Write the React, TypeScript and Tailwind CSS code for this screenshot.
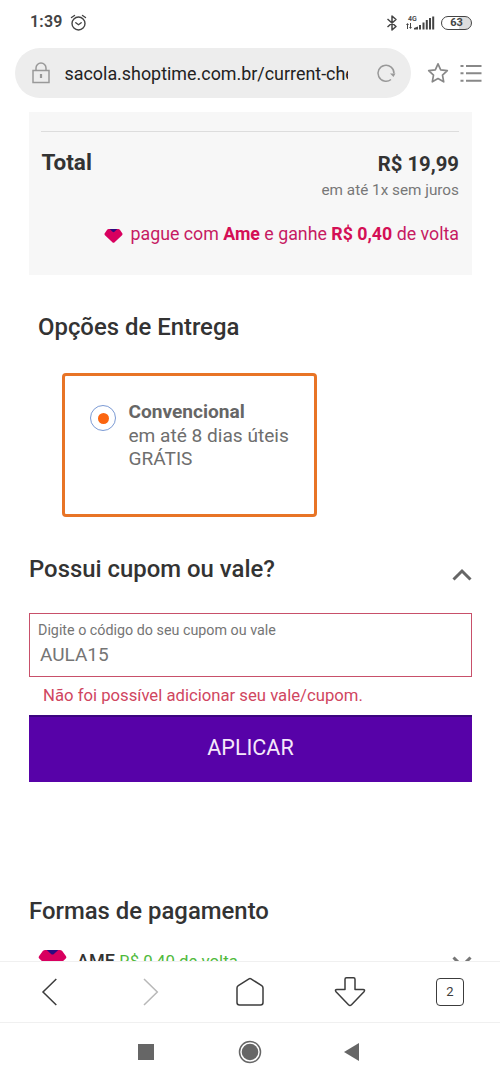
import type { ReactNode } from 'react'

function Gem({ className }: { className?: string }) {
  return (
    <svg viewBox="0 0 20 14" className={className} preserveAspectRatio="none">
      <path d="M5 0h10q1 0 1.700.7L19.200 4.200q.8 1-.2 2L11.200 13.300q-1.200 1-2.400 0L1 6.200q-1-1-.2-2L3.300.7Q4 0 5 0z" fill="#d8005f" />
      <path d="M6 0h8l-3 2.800q-1 .8-2 0z" fill="#2b0a80" />
    </svg>
  )
}

function StatusBar() {
  return (
    <div className="flex h-12 shrink-0 items-start justify-between pt-[12px] pr-7 pl-[30px] text-[#444]">
      <div className="flex h-5 items-center gap-[7px]">
        <span className="text-[16px] leading-5 font-semibold tracking-[0.2px]">1:39</span>
        <svg width="17" height="17" viewBox="0 0 17 17" fill="none" stroke="currentColor" strokeWidth="1.400" strokeLinecap="round">
          <circle cx="8.500" cy="9.500" r="6.500" />
          <path d="M5.800 8.700l2.700 2 2.700-2M1.500 3.500l3-2M15.500 3.500l-3-2" />
        </svg>
      </div>
      <div className="flex h-5 items-center pt-px">
        <svg width="12" height="18" viewBox="0 0 12 18" fill="none" stroke="currentColor" strokeWidth="1.500" strokeLinejoin="round">
          <path d="M1.500 5l8.500 7.500L6 16V2l4 3.500L1.500 13" />
        </svg>
        <svg width="29" height="18" viewBox="0 0 29 18" className="ml-[8px]" fill="currentColor">
          <text x="2" y="7" fontSize="7" fontWeight="600">4G</text>
          <path d="M0 11l1.500-2L3 11H2v4H1v-4zM4 9h1v4h1l-1.500 2L3 13h1z" />
          <path d="M8 15.500v-1.500l4-1.500v3zM13 11h2v4.500h-2zM16.500 8.500h2v7h-2zM19.800 6h2v9.500h-2zM23 4h2v11.500h-2zM26.200 2.500h2v13h-2z" />
        </svg>
        <div className="ml-[6px] flex h-[14px] w-[31px] items-center justify-center rounded-full border border-[#444] bg-gradient-to-r from-white from-60% to-[#ddd] to-60% text-[11px] leading-none font-bold">
          63
        </div>
      </div>
    </div>
  )
}

function AddressBar() {
  return (
    <div className="flex h-[50px] shrink-0 items-center pl-[15px] text-[#888]">
      <div className="flex h-[50px] w-[396px] items-center rounded-full bg-[#ededed] pl-[17px]">
        <svg width="18" height="22" viewBox="0 0 18 22" fill="none" stroke="#999" strokeWidth="1.500">
          <rect x="1" y="8.500" width="16" height="12" />
          <path d="M4 8.500V6a5 5 0 0 1 10 0v2.500" />
          <path d="M9 12v4" strokeWidth="2.200" />
        </svg>
        <span className="mt-[2px] ml-[14px] w-[284px] overflow-hidden pl-[0.500px] text-[17.900px] leading-6 whitespace-nowrap text-[#222]">
          sacola.shoptime.com.br/current-checkout
        </span>
        <svg width="20" height="20" viewBox="0 0 20 20" className="ml-[28px]" fill="none" stroke="#999" strokeWidth="1.500">
          <path d="M15 16.500A8 8 0 1 1 18 10.500" />
          <path d="M14 10.500h5.500L17.500 14z" fill="#999" stroke="none" />
        </svg>
      </div>
      <svg width="22" height="22" viewBox="0 0 22 22" className="ml-[16px]" fill="none" stroke="currentColor" strokeWidth="1.700" strokeLinejoin="round">
        <path d="M11 1.800l2.700 6 6.600.8-4.800 4.500 1.200 6.700L11 16.600l-5.700 3.200 1.200-6.700L1.700 8.600l6.600-.8z" />
      </svg>
      <svg width="22" height="20" viewBox="0 0 22 20" className="ml-[11px]" stroke="currentColor" strokeWidth="2">
        <path d="M.5 3h3M.5 10.200h3M.5 17.700h3M6 3h15.500M6 10.200h15.500M6 17.700h15.500" />
      </svg>
    </div>
  )
}

function Summary() {
  return (
    <section className="mr-[28px] ml-[29px] h-[163px] bg-[#f7f7f7] pt-[19px] pr-[13px] pl-[12px] text-[#333]">
      <div className="border-t border-[#ddd]" />
      <div className="flex justify-between pt-[18px]">
        <span className="pl-[0.500px] text-[22.500px] leading-6 font-bold">Total</span>
        <div className="flex flex-col items-end pt-[2px]">
          <span className="text-[20.300px] leading-6 font-bold">R$ 19,99</span>
          <span className="pt-[4px] text-[15.300px] leading-5 text-[#777]">em até 1x sem juros</span>
        </div>
      </div>
      <div className="flex items-center justify-end pt-[22px] text-[17.800px] leading-6 text-[#c61a62]">
        <Gem className="mt-[4px] mr-[7px] h-[14px] w-[19px]" />
        <span>
          pague com <b className="text-[#d40f55]">Ame</b> e ganhe <b className="text-[#d40f55]">R$ 0,40</b> de volta
        </span>
      </div>
    </section>
  )
}

function Delivery() {
  return (
    <section className="pt-[38px]">
      <h2 className="pl-[38px] text-[23.900px] leading-[28px] font-medium">Opções de Entrega</h2>
      <div className="mt-[32px] ml-[62px] flex h-[144px] w-[255px] rounded-[4px] border-3 border-[#e87426] pt-[24px] pl-[25px]">
        <div className="mt-[5px] flex size-[26px] items-center justify-center rounded-full border border-[#7b9ad4]">
          <div className="size-[11px] rounded-full bg-[#fb6510]" />
        </div>
        <div className="ml-[12px] pl-[0.500px] text-[19.100px] leading-[23.500px] text-[#6e6e6e]">
          <p className="font-bold text-[#666]">Convencional</p>
          <p>em até 8 dias úteis</p>
          <p>GRÁTIS</p>
        </div>
      </div>
    </section>
  )
}

function Coupon() {
  return (
    <section className="mr-[28px] ml-[29px] pt-[36px]">
      <div className="flex h-[32px] items-center justify-between">
        <h2 className="text-[23.900px] leading-[28px] font-medium">Possui cupom ou vale?</h2>
        <svg width="20" height="14" viewBox="0 0 20 14" className="mt-[12px]" fill="none" stroke="#666" strokeWidth="3">
          <path d="M1.500 11.500L10 3l8.500 8.500" />
        </svg>
      </div>
      <div className="mt-[28px] h-[64px] border border-[#c8506a] pt-[7px] pl-[8px] text-[#757575]">
        <p className="text-[14.300px] leading-[18px]">Digite o código do seu cupom ou vale</p>
        <p className="pt-[4px] pl-[2px] text-[19px] leading-6">AULA15</p>
      </div>
      <p className="pt-[7px] pl-[14px] text-[16.700px] leading-6 text-[#d0465f]">Não foi possível adicionar seu vale/cupom.</p>
      <button className="mt-[7px] block h-[67px] w-full border-t-2 border-[#3c0580] bg-[#5702a8] pb-[2px] text-[21.500px] text-[#f5e8fa]">
        APLICAR
      </button>
    </section>
  )
}

function Payment() {
  return (
    <section className="mr-[28px] ml-[29px] pt-[115px]">
      <h2 className="text-[23.900px] leading-[28px] font-medium">Formas de pagamento</h2>
      <div className="flex items-start pt-[25px] pl-[9px]">
        <Gem className="h-[20px] w-[29px]" />
        <p className="-mt-px ml-[10px] text-[18px] leading-6 font-medium">
          AME <span className="text-[16.800px] font-normal text-[#4fba3c]">R$ 0,40 de volta</span>
        </p>
        <svg width="20" height="14" viewBox="0 0 20 14" className="mt-[5px] ml-auto" fill="none" stroke="#777" strokeWidth="3">
          <path d="M1.500 2.500L10 11l8.500-8.500" />
        </svg>
      </div>
    </section>
  )
}

function ToolItem({ children }: { children: ReactNode }) {
  return <div className="flex w-[100px] items-center justify-center">{children}</div>
}

function BrowserToolbar() {
  return (
    <div className="flex h-[61px] shrink-0 border-t border-[#f0f0f0] bg-white pb-px text-[#3c3c3c]">
      <ToolItem>
        <svg width="32" height="32" viewBox="0 0 32 32" fill="none" stroke="currentColor" strokeWidth="1.500">
          <path d="M22.300 3L9 16l13.300 13" />
        </svg>
      </ToolItem>
      <ToolItem>
        <svg width="32" height="32" viewBox="0 0 32 32" fill="none" stroke="#b8b8b8" strokeWidth="1.500">
          <path d="M10 3l13.300 13L10 29" />
        </svg>
      </ToolItem>
      <ToolItem>
        <svg width="32" height="32" viewBox="0 0 32 32" fill="none" stroke="currentColor" strokeWidth="1.500">
          <path d="M3 12q0-1.500 1.300-2.300L15 2.800q1-.6 2 0l10.700 6.900Q29 10.500 29 12v14.500q0 2.500-2.500 2.500h-21Q3 29 3 26.500z" />
        </svg>
      </ToolItem>
      <ToolItem>
        <svg width="32" height="32" viewBox="0 0 32 32" fill="none" stroke="currentColor" strokeWidth="1.500" strokeLinejoin="round">
          <path d="M12.500 1.800h7q1.500 0 1.500 1.500V13.500h8q2.500.2 1 2.200L17.500 28.800q-1.500 1.400-3 0L2 15.700q-1.500-2 1-2.200h8V3.300q0-1.500 1.500-1.500z" />
        </svg>
      </ToolItem>
      <ToolItem>
        <div className="flex size-[28px] items-center justify-center rounded-[4px] border-[1.500px] border-[#3c3c3c] text-[13px] leading-none">
          2
        </div>
      </ToolItem>
    </div>
  )
}

function AndroidNav() {
  return (
    <div className="flex h-[60px] shrink-0 items-center border-t border-[#f0f0f0] bg-white pb-[2px] pl-[138px]">
      <div className="size-[16px] bg-[#666]" />
      <svg width="24" height="24" viewBox="0 0 24 24" className="ml-[84px]">
        <circle cx="12" cy="12" r="10.500" fill="none" stroke="#666" strokeWidth="1.500" />
        <circle cx="12" cy="12" r="8.300" fill="#666" />
      </svg>
      <svg width="16" height="18" viewBox="0 0 16 18" className="ml-[82px]" fill="#666">
        <path d="M0 9l15-9v18z" />
      </svg>
    </div>
  )
}

export default function App() {
  return (
    <div className="flex h-[1082px] w-[500px] flex-col overflow-hidden bg-white font-[Roboto,sans-serif] text-[#333]">
      <StatusBar />
      <AddressBar />
      <main className="mt-[14px] min-h-0 flex-1 overflow-hidden">
        <Summary />
        <Delivery />
        <Coupon />
        <Payment />
      </main>
      <BrowserToolbar />
      <AndroidNav />
    </div>
  )
}
